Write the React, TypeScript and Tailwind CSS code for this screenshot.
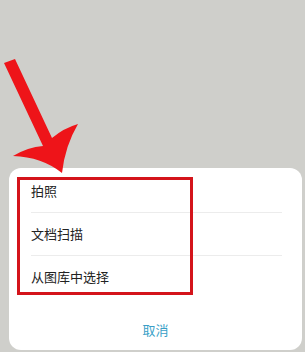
import React from 'react'

const font = { fontFamily: '"Noto Sans CJK SC", "Noto Sans", sans-serif' }

const options = ['拍照', '文档扫描', '从图库中选择']

export default function App() {
  return (
    <div className="relative w-[305px] h-[352px] bg-[#cfcfcb] overflow-hidden flex flex-col justify-end" style={font}>
      {/* bottom sheet */}
      <div className="ml-[9px] mr-[3px] mb-[2px] bg-white rounded-[12px] pt-[2px]">
        {options.map((o, i) => (
          <div key={o}>
            {i > 0 && <div className="ml-[22px] mr-[20px] h-px bg-[#ececec]" />}
            <div className="h-[42px] flex items-center pl-[22px] text-[13px] text-[#222]">{o}</div>
          </div>
        ))}
        <div className="pt-[23px] pb-[11px] text-center text-[13px] leading-[18px] text-[#3a9fc7]">取消</div>
      </div>

      {/* annotation box */}
      <div className="absolute left-[17px] top-[177px] w-[176px] h-[118px] border-[3px] border-[#d4141b]" />

      {/* annotation arrow */}
      <svg className="absolute left-0 top-0" width="90" height="180" viewBox="0 0 90 180">
        <path
          d="M4,63 L15,59 L52,138 Q64,128 78,124 Q65,146 62,173 Q42,157 13,156 Q28,147 43,146 Z"
          fill="#ee1419"
        />
      </svg>
    </div>
  )
}
